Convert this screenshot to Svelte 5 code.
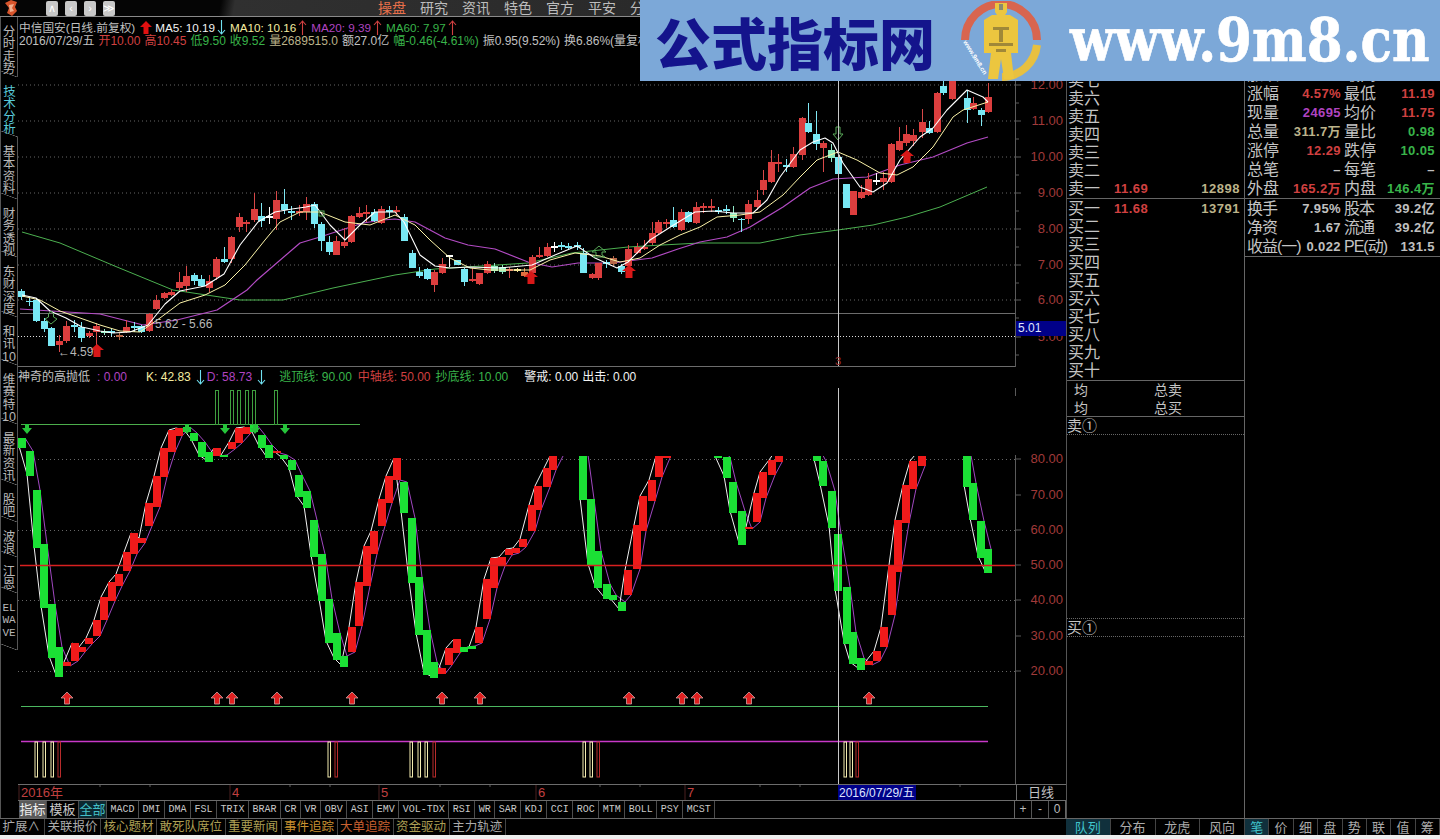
<script>
  const menu = ['操盘', '研究', '资讯', '特色', '官方', '平安', '分'];
  const tabs = [
    { t: ['分', '时', '走', '势'], h: 60 }, { t: ['技', '术', '分', '析'], h: 60, on: true }, { t: ['基', '本', '资', '料'], h: 62 }, { t: ['财', '务', '透', '视'], h: 58 },
    { t: ['东', '财', '深', '度'], h: 60 }, { t: ['和', '讯', '10'], h: 48 }, { t: ['维', '赛', '特', '10'], h: 59 }, { t: ['最', '新', '资', '讯'], h: 61 },
    { t: ['股', '吧'], h: 37 }, { t: ['波', '浪'], h: 35 }, { t: ['江', '恩'], h: 36 }
  ];

  const line1 = [
    { t: '中信国安(日线.前复权)', c: 'gray' }, { a: 'fat' }, { t: 'MA5: 10.19', c: 'white' }, { a: 'down' },
    { t: 'MA10: 10.16', c: 'yellow', m: 1 }, { a: 'up' }, { t: 'MA20: 9.39', c: 'purple', m: 1 }, { a: 'up' },
    { t: 'MA60: 7.97', c: 'green', m: 1 }, { a: 'up' }
  ];
  const line2 = [
    ['2016/07/29/五', 'gray'], ['开10.00', 'red'], ['高10.45', 'red'], ['低9.50', 'green'], ['收9.52', 'green'],
    ['量2689515.0', 'khaki'], ['额27.0亿', 'gray'], ['幅-0.46(-4.61%)', 'green'], ['振0.95(9.52%)', 'gray'], ['换6.86%(量复权)', 'gray']
  ];

  // x, top, bottom, high, low, colour: page coordinates
  const candles = [
    [21,291,297,289,300,'c'],[29,301,302,297,306,'c'],[36,300,321,299,322,'c'],[44,321,329,318,332,'c'],[51,328,346,327,346,'c'],
    [59,341,345,335,352,'r'],[66,326,341,321,343,'r'],[74,325,327,320,332,'c'],[81,327,338,322,342,'c'],[89,333,336,331,338,'r'],
    [96,326,332,323,345,'r'],[104,331,333,329,335,'g'],[111,331,333,328,336,'c'],[119,335,337,333,340,'b'],[126,327,332,320,333,'r'],
    [134,326,328,322,332,'c'],[141,326,332,325,333,'c'],[149,314,331,313,332,'r'],[156,300,309,295,310,'r'],[164,293,298,292,299,'r'],
    [171,292,295,290,296,'r'],[179,282,288,272,290,'r'],[186,276,286,266,292,'r'],[194,275,281,273,285,'c'],[201,279,286,275,287,'c'],
    [209,281,288,275,292,'r'],[216,259,277,257,280,'r'],[224,259,262,247,263,'c'],[231,237,259,236,263,'r'],[239,217,227,213,232,'r'],
    [246,222,224,220,232,'r'],[254,209,220,193,222,'r'],[261,216,221,203,227,'c'],[269,216,218,207,224,'w'],[276,200,219,191,230,'r'],
    [284,204,210,189,214,'c'],[291,211,213,206,220,'c'],[299,211,213,205,216,'r'],[306,204,212,197,220,'r'],[314,204,224,202,228,'c'],
    [321,224,241,222,251,'c'],[329,242,252,236,255,'c'],[336,241,255,236,255,'r'],[344,242,246,228,248,'r'],[351,216,242,215,243,'r'],
    [359,213,217,207,218,'r'],[366,212,214,205,222,'r'],[374,212,221,209,222,'c'],[381,209,223,206,224,'r'],[389,210,212,206,218,'c'],
    [396,210,212,206,216,'r'],[404,217,241,214,241,'c'],[412,253,268,250,268,'c'],[419,272,276,267,278,'c'],[427,269,279,268,280,'c'],
    [434,272,285,270,292,'r'],[442,264,273,258,274,'r'],[449,255,257,256,267,'w'],[457,260,265,260,265,'c'],[464,269,282,268,286,'c'],
    [472,279,281,268,282,'r'],[479,273,284,273,285,'r'],[487,264,273,261,274,'r'],[494,266,271,263,273,'g'],[502,267,272,265,274,'g'],
    [509,269,271,267,278,'r'],[517,269,271,268,272,'y'],[524,272,276,268,277,'o'],[532,257,273,255,277,'r'],[539,255,257,247,258,'r'],
    [547,247,256,243,257,'r'],[554,246,248,242,252,'w'],[561,245,247,242,250,'c'],[568,246,248,243,249,'c'],[577,245,247,242,250,'c'],
    [583,253,273,248,273,'c'],[592,274,278,273,279,'r'],[598,263,278,263,280,'r'],[606,262,264,260,268,'c'],[613,258,264,256,266,'b'],
    [621,266,272,264,274,'c'],[628,249,266,245,268,'r'],[637,247,253,243,254,'r'],[644,247,249,240,250,'r'],[652,233,243,222,245,'r'],
    [658,222,233,220,234,'r'],[666,222,224,219,228,'r'],[673,220,227,207,228,'c'],[681,212,230,209,231,'r'],[688,212,222,211,223,'c'],
    [696,207,223,202,224,'r'],[703,206,208,203,213,'r'],[711,206,208,199,212,'r'],[718,210,212,207,214,'c'],[726,209,211,205,214,'c'],
    [733,213,218,206,222,'g'],[741,219,220,218,232,'c'],[748,204,219,200,224,'r'],[757,200,207,190,210,'r'],[763,180,190,170,195,'r'],
    [771,162,182,150,183,'r'],[778,162,164,154,172,'r'],[786,165,167,159,172,'c'],[793,154,167,147,168,'r'],[802,118,155,117,160,'r'],
    [808,123,132,103,133,'c'],[816,134,144,111,150,'c'],[823,143,148,141,172,'r'],[831,150,158,144,162,'g'],[838,157,174,156,175,'c'],
    [846,184,208,184,208,'c'],[853,191,215,191,215,'r'],[861,192,198,185,199,'r'],[868,179,195,173,196,'r'],[876,180,182,173,185,'w'],
    [883,178,182,172,190,'r'],[891,144,182,143,183,'r'],[899,141,150,127,151,'r'],[906,134,143,125,146,'r'],[913,135,141,129,146,'r'],
    [922,122,132,109,138,'r'],[929,128,133,121,134,'c'],[937,93,132,92,133,'r'],[943,86,93,76,95,'c'],[952,78,99,72,100,'r'],
    [967,98,110,90,123,'c'],[973,103,109,97,110,'r'],[981,110,115,108,126,'c'],[988,97,112,83,113,'r']
  ];
  const ma5 = '22,295 36,298 50,311 66,318 82,327 100,331 113,333 130,332 148,325 165,304 180,291 205,286 224,274 240,245 258,222 275,212 292,209 306,207 315,205 330,225 345,240 360,225 375,212 395,212 404,222 420,255 435,266 450,268 470,267 500,268 532,265 555,255 577,246 595,258 617,268 628,262 650,240 672,226 695,212 713,211 733,213 753,213 767,200 780,177 800,150 813,142 825,138 833,143 843,163 860,187 873,192 887,183 900,160 920,137 933,128 947,110 967,90 983,97 988,102';
  const ma10 = '22,296 40,300 60,311 80,318 100,325 120,331 140,332 160,318 180,303 205,295 225,285 245,265 265,240 280,222 300,212 320,212 345,222 370,225 395,215 415,225 430,240 450,258 470,268 490,270 510,270 530,270 550,260 575,253 600,256 620,262 640,258 660,245 680,235 700,227 717,217 740,215 760,212 783,195 800,177 817,160 838,152 857,160 880,173 897,175 913,167 933,147 953,117 963,110 988,102';
  const ma20 = '20,309 67,312 100,314 143,325 177,320 217,310 247,290 257,280 300,243 320,237 363,223 383,220 395,219 415,222 445,238 468,245 495,249 528,262 552,267 578,263 612,263 652,258 678,249 700,242 727,237 750,227 783,207 810,188 833,179 867,177 900,165 933,157 967,143 988,137';
  const ma60 = '22,232 60,243 117,267 173,290 240,300 283,300 333,288 395,275 435,269 482,266 528,263 572,253 628,247 662,245 700,243 760,243 800,235 838,230 873,225 907,217 940,207 987,187';

  const priceGrid = [85, 121, 157, 193, 229, 265, 300];
  const priceAxis = [[85,'12.00'],[121,'11.00'],[157,'10.00'],[193,'9.00'],[229,'8.00'],[265,'7.00'],[300,'6.00'],[337,'5.00']];
  const kdAxis = [[459,'80.00'],[495,'70.00'],[530,'60.00'],[565,'50.00'],[600,'40.00'],[636,'30.00'],[671,'20.00']];
  const kdGrid = [459.5, 530.5, 600.5, 671.5];

  // x, top, bottom, red?
  const kd = [
    [22,438,448,0],[30,451,476,0],[37,490,548,0],[44,544,608,0],[52,604,658,0],[59,647,677,0],[67,662,666,1],[75,643,661,1],
    [82,647,652,1],[89,638,644,1],[97,620,636,1],[104,597,620,1],[112,582,601,1],[119,574,586,1],[127,552,571,1],[134,533,554,1],
    [142,538,543,1],[149,503,526,1],[157,476,507,1],[164,448,477,1],[172,430,452,1],[179,428,436,1],[187,427,432,0],[194,433,441,0],
    [202,442,457,0],[209,452,462,0],[217,448,456,1],[224,455,457,0],[232,442,449,1],[239,428,443,1],[247,427,434,1],[254,425,432,0],
    [262,435,448,0],[269,445,458,0],[277,451,453,1],[284,455,459,0],[292,460,470,0],[299,475,497,0],[307,491,508,0],[314,520,557,0],
    [322,554,601,0],[329,599,643,0],[337,633,660,0],[344,656,667,0],[352,627,652,1],[359,582,626,1],[367,546,586,1],[374,531,554,1],
    [382,499,526,1],[389,476,503,1],[397,458,480,1],[404,482,513,0],[412,518,583,0],[419,577,635,0],[427,630,675,0],[434,662,678,0],
    [442,668,674,1],[449,648,665,1],[457,639,653,1],[464,647,652,0],[472,646,649,0],[479,627,643,1],[487,579,619,1],[494,558,588,1],
    [502,557,566,1],[509,549,555,1],[516,548,553,1],[523,539,547,1],[532,505,531,1],[538,486,510,1],[547,468,487,1],[553,456,470,1],
    [560,440,456,1],[583,440,500,0],[591,499,566,0],[598,551,588,0],[607,584,599,0],[613,595,600,0],[622,602,611,0],[628,570,595,1],
    [637,525,569,1],[643,496,531,1],[652,480,501,1],[659,456,477,1],[667,450,458,1],[718,450,458,0],[727,457,478,0],[733,482,513,0],
    [742,511,545,0],[749,527,529,1],[757,493,522,1],[763,472,498,1],[772,460,475,1],[779,450,462,1],[817,450,461,0],[823,461,486,0],
    [832,491,528,0],[838,534,591,0],[847,587,644,0],[853,632,664,0],[861,658,670,0],[869,661,665,1],[877,651,661,1],[884,627,647,1],
    [892,565,615,1],[898,520,572,1],[906,485,523,1],[913,461,489,1],[922,450,466,1],[967,450,487,0],[973,483,520,0],[981,521,558,0],[988,549,573,0]
  ];
  // the curves break where they run off the top of the panel
  const curve = (dx, pick) => kd.map((b, i) => {
    const cmd = i === 0 || b[0] - kd[i - 1][0] > 20 ? 'M' : 'L';
    return `${cmd}${b[0] + dx} ${pick(b)}`;
  }).join('');
  const kLine = curve(-3, b => (b[3] ? b[1] : b[2] - 2));
  const dLine = curve(3, b => (b[3] ? b[2] : b[1]));

  const topBars = [217, 232, 239, 247, 254, 276];
  const greenArrows = [27, 187, 225, 255, 285];
  const redArrows = [67, 217, 232, 277, 352, 442, 480, 629, 682, 697, 749, 869];
  const paleBars = [36, 44, 52, 329, 411, 419, 426, 584, 591, 845, 851];
  const redBars = [59, 336, 434, 598, 857];
  const months = [[21,'2016年'], [232,'4'], [381,'5'], [538,'6'], [687,'7']];
  const dateTicks = [100, 150, 290, 330, 440, 490, 600, 640, 760, 800, 880, 960];

  const kdTitle = [
    ['神奇的高抛低', 'gray', 0], [': 0.00', 'purple', 7], ['K: 42.83', 'yellow', 19], ['↓', 'cyan', 3], ['D: 58.73', 'purple', 2], ['↓', 'cyan', 3],
    ['逃顶线: 90.00', 'green', 13], ['中轴线: 50.00', 'red', 6], ['抄底线: 10.00', 'green', 5], ['警戒: 0.00', 'white', 16], ['出击: 0.00', 'white', 4]
  ];

  const nums = ['七', '六', '五', '四', '三', '二', '一'];
  const sells = nums.map(n => ({ l: '卖' + n, p: n === '一' ? '11.69' : '', v: n === '一' ? '12898' : '' }));
  const buys = ['一', '二', '三', '四', '五', '六', '七', '八', '九', '十'].map(n => ({ l: '买' + n, p: n === '一' ? '11.68' : '', v: n === '一' ? '13791' : '' }));

  const quote = [
    ['涨跌', '', '', '最高', '', ''],
    ['涨幅', '4.57%', 'red', '最低', '11.19', 'red'], ['现量', '24695', 'purple', '均价', '11.75', 'red'],
    ['总量', '311.7万', 'khaki', '量比', '0.98', 'green'], ['涨停', '12.29', 'red', '跌停', '10.05', 'green'],
    ['总笔', '–', 'gray', '每笔', '–', 'gray'], ['外盘', '165.2万', 'red', '内盘', '146.4万', 'green']
  ];
  const finance = [
    ['换手', '7.95%', 'gray', '股本', '39.2亿', 'gray'], ['净资', '1.67', 'gray', '流通', '39.2亿', 'gray'],
    ['收益(一)', '0.022', 'gray', 'PE(动)', '131.5', 'gray']
  ];

  const indicators = ['MACD','DMI','DMA','FSL','TRIX','BRAR','CR','VR','OBV','ASI','EMV','VOL-TDX','RSI','WR','SAR','KDJ','CCI','ROC','MTM','BOLL','PSY','MCST'];
  const links = [['扩展∧',''],['关联报价',''],['核心题材','olive'],['敢死队席位','olive'],['重要新闻','olive'],['事件追踪','amber'],['大单追踪','orange'],['资金驱动','olive'],['主力轨迹','']];
  const sideTabs = ['分布', '龙虎', '风向'];
  const detailTabs = ['价', '细', '盘', '势', '联', '值', '筹'];
</script>

{#snippet upArrow(x, y)}
  <path class="red-arrow" d="M{x} {y}l6 6h-3.5v6h-5v-6h-3.5z" />
{/snippet}

{#snippet thin(down, cls)}
  <svg class="thin {cls}" width="9" height="15" viewBox="0 0 9 15">
    {#if down}
      <path d="M4.5 0v14M1 10l3.5 4 3.5-4" />
    {:else}
      <path d="M4.5 15V1M1 5l3.5-4 3.5 4" />
    {/if}
  </svg>
{/snippet}

<div class="screen">
  <header class="top">
    <svg class="mark" width="14" height="16" viewBox="0 0 14 16"><path d="M1 3L7 0l6 2-2 5 2 4-5 5-5-3 2-5z" fill="#d8552c" /><path d="M5 5l5-1-2 4 2 3-4 1z" fill="#f0b090" /></svg>
    <div class="nav-btns">
      <button>∧</button><button>‹</button><button>›</button><button>≫</button>
    </div>
    <nav class="menu">
      {#each menu as m, i}<span class:hot={i === 0}>{m}</span>{/each}
    </nav>
  </header>

  <div class="main">
    <aside class="tabs">
      {#each tabs as tab}
        <div class="tab" class:on={tab.on} style="height:{tab.h}px">
          {#each tab.t as c}<div>{c}</div>{/each}
        </div>
      {/each}
      <div class="tab wave"><div>EL</div><div>WA</div><div>VE</div></div>
    </aside>

    <section class="charts">
      <div class="info">
        <div class="info-line first">
          {#each line1 as it}
            {#if it.a === 'fat'}
              <svg class="fat" width="12" height="13" viewBox="0 0 12 13"><path d="M6 0l6 6H8.5v7h-5V6H0z" fill="#e01010" /></svg>
            {:else if it.a === 'down'}
              {@render thin(true, 'cyan')}
            {:else if it.a === 'up'}
              {@render thin(false, 'red')}
            {:else}
              <span class={it.c} class:gap={it.m}>{it.t}</span>
            {/if}
          {/each}
        </div>
        <div class="info-line second">
          {#each line2 as [t, c]}<span class={c}>{t}</span>{/each}
        </div>
      </div>

      <svg class="price" width="1048" height="316" viewBox="18 51 1048 316">
        <g class="grid">
          {#each priceGrid as y}<line x1="18" x2="1015" y1={y} y2={y} />{/each}
        </g>
        <line class="sep" x1="20" x2="1015" y1="313.5" y2="313.5" />
        <line class="dots-white" x1="18" x2="1015" y1="336.5" y2="336.5" />
        <line class="axis" x1="1015.5" x2="1015.5" y1="51" y2="367" />
        {#each priceAxis as [y, t]}
          <line class="axis" x1="1015" x2="1021" y1={y} y2={y} />
          <line class="axis" x1="1015" x2="1019" y1={y + 18} y2={y + 18} />
          <text class="tick" x="1063" y={y + 4}>{t}</text>
        {/each}
        <rect class="now" x="1016" y="321" width="50" height="15" />
        <text class="now-text" x="1018" y="332">5.01</text>

        <polyline class="ma m60" points={ma60} />
        <polyline class="ma m20" points={ma20} />
        {#each candles as [x, top, bot, hi, lo, c]}
          <g class="k-{c}">
            <line x1={x + .5} x2={x + .5} y1={hi} y2={lo} />
            <rect x={x - 3} y={top} width="7" height={bot - top} />
          </g>
        {/each}
        <polyline class="ma m10" points={ma10} />
        <polyline class="ma m5" points={ma5} />

        <path class="mark-g" d="M51 311l2.5 3v3l3.5 2-6 5-6-5 3.5-2v-3z" />
        <rect class="mark-g" x="319" y="211" width="5" height="5" />
        <path class="mark-g" d="M599 246l7 6h-4v3l3 2h-12l3-2v-3h-4z" />
        <path class="mark-g" d="M836 127h4v7h3l-5 6-5-6h3z" />
        {#each [[97, 344], [531, 271], [629, 265], [907, 150]] as [x, y]}
          <path class="big-arrow" d="M{x} {y}l7 6h-3.5v7h-7v-7H{x - 7}z" />
        {/each}
        <text class="note" x="155" y="328">5.62 - 5.66</text>
        <text class="note" x="58" y="356">←4.59</text>
        <line class="cross" x1="838.5" x2="838.5" y1="51" y2="367" />
        <text class="mark-r" x="835" y="365">3</text>
        <line class="sep" x1="18" x2="1015" y1="366.5" y2="366.5" />
      </svg>

      <div class="kd-title">
        {#each kdTitle as [t, c, m]}
          {#if t === '↓'}
            <span class="kd-arrow" style="margin-left:{m}px">{@render thin(true, c)}</span>
          {:else}
            <span class={c} style="margin-left:{m}px">{t}</span>
          {/if}
        {/each}
      </div>

      <svg class="kd" width="1048" height="396" viewBox="18 388 1048 396">
        <defs>
          <clipPath id="kdclip">
            <path d="M18 425H360V456H1015V784H18z" />
          </clipPath>
        </defs>
        <g class="grid">
          {#each kdGrid as y}<line x1={y === 459.5 ? 34 : 18} x2="1015" y1={y} y2={y} />{/each}
        </g>
        <line class="axis" x1="1015.5" x2="1015.5" y1="388" y2="396" />
        <line class="axis" x1="1015.5" x2="1015.5" y1="455" y2="784" />
        {#each kdAxis as [y, t]}
          <line class="axis" x1="1015" x2="1021" y1={y} y2={y} />
          <text class="tick" x="1063" y={y + 4}>{t}</text>
        {/each}
        <line class="hi" x1="21" x2="360" y1="424.5" y2="424.5" />
        {#each topBars as x}<rect class="top-bar" x={x - 1.5} y="390.5" width="3" height="34" />{/each}

        <g clip-path="url(#kdclip)">
          <path class="d-line" d={dLine} />
          <path class="k-line" d={kLine} />
          {#each kd as [x, top, bot, red]}
            <rect class={red ? 'bar-r' : 'bar-g'} x={x - 4} y={top} width="8" height={bot - top} />
          {/each}
        </g>
        <line class="mid" x1="20" x2="1015" y1="565.5" y2="565.5" />
        {#each greenArrows as x}
          <path class="green-arrow" d="M{x - 2} 424h4v4h3l-5 6-5-6h3z" />
        {/each}
        {#each redArrows as x}{@render upArrow(x, 692)}{/each}
        <line class="low-line" x1="21" x2="988" y1="706.5" y2="706.5" />
        <line class="sig-line" x1="21" x2="988" y1="741.5" y2="741.5" />
        {#each paleBars as x}<rect class="pale" x={x - 1} y="742" width="2.5" height="35" />{/each}
        {#each redBars as x}<rect class="dark-r" x={x - 1} y="742" width="2.5" height="35" />{/each}
        <line class="cross" x1="838.5" x2="838.5" y1="388" y2="784" />
      </svg>

      <svg class="dates" width="1048" height="17" viewBox="18 784 1048 17">
        <line class="sep" x1="18" x2="1066" y1="784.5" y2="784.5" />
        <line class="sep" x1="18" x2="1066" y1="800.5" y2="800.5" />
        {#each dateTicks as x}<line class="axis" x1={x} x2={x} y1="785" y2="787" />{/each}
        {#each months as [x, t]}
          <line class="dark-tick" x1={x - 2} x2={x - 2} y1="785" y2="800" />
          <text class="month" x={x} y="797">{t}</text>
        {/each}
        <rect class="now" x="838" y="785" width="78" height="15" />
        <text class="now-text" x="839" y="797">2016/07/29/五</text>
        <line class="sep" x1="1016.5" x2="1016.5" y1="784" y2="800" />
        <text class="cycle" x="1041" y="797">日线</text>
      </svg>

      <div class="toolbar">
        <div class="indicators">
          <span class="tool cn active">指标</span><span class="tool cn wide">模板</span><span class="tool cn all">全部</span>
          {#each indicators as t}<span class="tool">{t}</span>{/each}
        </div>
        <div class="zoom-btns"><span>+</span><span>-</span><span>0</span></div>
      </div>
    </section>

    <section class="book">
      <div class="side sell">
        {#each sells as r}
          <div class="row"><span>{r.l}</span><b class="red">{r.p}</b><b class="khaki">{r.v}</b></div>
        {/each}
      </div>
      <div class="side buy">
        {#each buys as r}
          <div class="row"><span>{r.l}</span><b class="red">{r.p}</b><b class="khaki">{r.v}</b></div>
        {/each}
      </div>
      <div class="sum">
        <div class="sum-row"><span class="clip">均</span><span>总卖</span></div>
        <div class="sum-row"><span class="clip">均</span><span>总买</span></div>
      </div>
      <div class="queue">卖①</div>
      <div class="queue-fill"></div>
      <div class="queue top-dot">买①</div>
    </section>

    <section class="quote">
      <div class="q-group first">
        {#each quote as [a, av, ac, b, bv, bc]}
          <div class="q-row"><span>{a}</span><b class={ac}>{av}</b><span>{b}</span><b class={bc}>{bv}</b></div>
        {/each}
      </div>
      <div class="q-group">
        {#each finance as [a, av, ac, b, bv, bc]}
          <div class="q-row"><span class="nar">{a}</span><b class={ac}>{av}</b><span class="nar">{b}</span><b class={bc}>{bv}</b></div>
        {/each}
      </div>
    </section>
  </div>

  <footer class="links">
    <div class="link-list">
      {#each links as [t, c]}<span class={c}>{t}</span>{/each}
    </div>
    <div class="side-tabs">
      <span class="sel">队列</span>
      {#each sideTabs as t}<span>{t}</span>{/each}
    </div>
    <div class="detail-tabs">
      <span class="sel">笔</span>
      {#each detailTabs as t}<span>{t}</span>{/each}
    </div>
  </footer>
  <div class="strip"></div>

  <div class="banner">
    <span class="site-name">公式指标网</span>
    <svg class="logo" width="82" height="80" viewBox="0 0 82 80">
      <path d="M5 39A36 36 0 0 1 77 39" fill="none" stroke="#d8654f" stroke-width="8" />
      <path d="M77 44A36 36 0 0 1 42 76" fill="none" stroke="#e8c040" stroke-width="8" />
      <path d="M35 2h12v9l-2 3h5l8 5v33l-7 0 3 26H44l-3-20-3 20H28l3-26h-7V19l8-5h5l-2-3z" fill="#ecc63f" />
      <path d="M33 26h16v3H33zM39 29h4v12h-4zM29 42h24v3H29zM36 48h10v3H36z" fill="#a08838" />
      <path d="M39 3h4v6h-4z" fill="#8a8a70" />
      <text class="logo-url" transform="translate(3 41) rotate(58)">www.9m8.cn</text>
    </svg>
    <span class="site-url">www.9m8.cn</span>
  </div>
</div>

<style>
  :global(body) { margin: 0; background: #000; }
  .screen { position: relative; width: 1440px; height: 839px; overflow: hidden; background: #000; color: #bbb;
    font-family: "Liberation Sans", "Noto Sans CJK SC", sans-serif; font-size: 12px; }

  .top { height: 16px; display: flex; align-items: center; border-bottom: 1px solid #8a8a8a; overflow: hidden;
    background: linear-gradient(100deg, #050505 0 218px, #303030 232px, #1e1e1e 100%); }
  .mark { margin-left: 4px; }
  .nav-btns { display: flex; gap: 7px; margin-left: 28px; }
  .nav-btns button { width: 12px; height: 15px; padding: 0; border: 0; border-radius: 2px; background: #c8c8c8; color: #fff; font-size: 11px; line-height: 14px; }
  .menu { display: flex; gap: 14px; margin-left: 263px; font-size: 14px; color: #bdbdbd; line-height: 16px; }
  .hot { color: #e8704a; }

  .main { display: flex; height: 801px; }

  .tabs { width: 17px; flex: none; border-left: 1px solid #555; color: #b8b8b8; font-size: 12.5px; line-height: 12.4px; }
  .tab { box-sizing: border-box; padding-top: 9px; text-align: center; white-space: nowrap; border-right: 1px solid #555;
    background: linear-gradient(to top right, transparent calc(50% - .6px), #777 50%, transparent calc(50% + .6px)) bottom / 100% 6px no-repeat; }
  .tab.on { color: #58c8d8; border-right: 0; }
  .wave { height: 57px; font-family: "Liberation Mono", monospace; font-size: 11px; }

  .charts { width: 1048px; flex: none; display: flex; flex-direction: column; }
  .info { height: 34px; padding-top: 3px; box-sizing: border-box; }
  .info-line { display: flex; height: 15px; line-height: 15px; white-space: nowrap; font-size: 12px; padding-left: 1px; }
  .info-line.first { font-size: 11.7px; }
  .info-line > span.gap { margin-left: 4px; }
  .fat { margin: 1px 3px 0 5px; flex: none; }
  .thin { flex: none; margin-left: 2px; fill: none; stroke: currentColor; stroke-width: 1.1; }
  .second { gap: 4px; margin-top: -1px; }
  .white { color: #f2f2f2; } .gray { color: #c0c0c0; } .red { color: #d04040; } .green { color: #39b44a; }
  .yellow { color: #f4eca0; } .purple { color: #b044c0; } .cyan { color: #70e0f0; } .khaki { color: #bcb38a; }

  svg { display: block; }
  .price, .kd { flex: none; }
  .grid line { stroke: #666; stroke-dasharray: 1 3; }
  .sep { stroke: #6c6c6c; }
  .dots-white { stroke: #ddd; stroke-dasharray: 1 2; }
  .axis { stroke: #5a5a5a; }
  .tick { fill: #a03a3a; font-size: 13px; text-anchor: end; }
  .now { fill: #000088; }
  .now-text { fill: #dfe4ff; font-size: 12px; }
  .ma { fill: none; stroke-linejoin: round; }
  .m5 { stroke: #fff; stroke-width: 1.1; } .m10 { stroke: #fbf3a8; stroke-width: 1; }
  .m20 { stroke: #b34bc4; stroke-width: 1.2; } .m60 { stroke: #4cb050; stroke-width: 1; }
  .k-r line { stroke: #d84848; } .k-r rect { fill: #dc3e3e; }
  .k-c line { stroke: #80e8f4; } .k-c rect { fill: #78e8f4; }
  .k-w line { stroke: #fff; } .k-w rect { fill: #fff; }
  .k-g line { stroke: #90e8c8; } .k-g rect { fill: #90ecc0; }
  .k-b line { stroke: #b86848; } .k-b rect { fill: #b86848; }
  .k-y line { stroke: #f0e090; } .k-y rect { fill: #f0e090; }
  .k-o line { stroke: #e07040; } .k-o rect { fill: #e07040; }
  .mark-g { fill: none; stroke: #58a858; }
  .big-arrow { fill: #d81818; }
  .note { fill: #b8b8b8; font-size: 12px; }
  .cross { stroke: #c8c8c8; }
  .mark-r { fill: #a03030; font-size: 11px; }

  .kd-title { height: 21px; line-height: 21px; display: flex; white-space: nowrap; font-size: 12px; }
  .kd-arrow { padding-top: 3px; }
  .mid { stroke: #d82020; stroke-width: 1.5; }
  .hi { stroke: #4cae4c; stroke-width: 1.2; }
  .top-bar { fill: none; stroke: #3f9f3f; }
  .bar-r { fill: #f01a1a; } .bar-g { fill: #1be035; }
  .k-line { fill: none; stroke: #f0f0f0; }
  .d-line { fill: none; stroke: #a048c0; }
  .green-arrow { fill: #26c43a; }
  .red-arrow { fill: #e02020; stroke: #d0a0a0; stroke-width: .8; }
  .low-line { stroke: #4cb860; stroke-width: 1.2; }
  .sig-line { stroke: #c838c8; stroke-width: 1.5; }
  .pale { fill: none; stroke: #f4ecb0; }
  .dark-r { fill: none; stroke: #b82c2c; }

  .dates { flex: none; }
  .dark-tick { stroke: #4a2020; }
  .month { fill: #c04040; font-size: 13px; }
  .cycle { fill: #c0c0c0; font-size: 13px; text-anchor: middle; }

  .toolbar { height: 17px; display: flex; justify-content: space-between; }
  .indicators { display: flex; margin-left: 1px; }
  .tool { display: block; padding: 0 3.5px; border-right: 1px solid #4c4c4c; font-family: "Liberation Mono", monospace; font-size: 10px; line-height: 17px; color: #c8c8c8; }
  .tool.cn { font-family: "Noto Sans CJK SC", sans-serif; font-size: 13px; padding: 0 .5px; width: 26px; text-align: center; line-height: 16px; }
  .tool.wide { width: 30px; }
  .tool.active { background: #5a5a5a; color: #eee; }
  .tool.all { color: #44c0c8; background: #0c2830; }
  .zoom-btns { display: flex; width: 50px; margin-right: 0; border-left: 1px solid #666; border-right: 1px solid #666; }
  .zoom-btns span { flex: 1; text-align: center; line-height: 16px; color: #bbb; border-right: 1px solid #555; }
  .zoom-btns span:last-child { border-right: 0; }

  .book { width: 179px; box-sizing: border-box; flex: none; display: flex; flex-direction: column; border-left: 1px solid #555; border-right: 1px solid #666; color: #c4c4c4; font-size: 16px; }
  .side { border-bottom: 1px solid #666; }
  .side.sell { padding-top: 55px; }
  .side.buy { padding-top: 1px; }
  .row { display: grid; grid-template-columns: 47px 50px 76px; height: 18px; line-height: 18px; }
  .row span { white-space: nowrap; margin-left: 1px; }
  .row b { font-size: 13px; letter-spacing: .5px; font-weight: 700; }
  .row b.khaki { text-align: right; }
  .sum { font-size: 14px; border-bottom: 1px solid #666; }
  .sum-row { height: 17.5px; line-height: 18px; display: flex; }
  .clip { width: 87px; padding-left: 7px; box-sizing: border-box; }
  .queue { height: 17px; line-height: 18px; font-size: 15px; border-bottom: 1px dotted #666; }
  .queue-fill { height: 183px; }
  .queue.top-dot { border-top: 1px dotted #666; }

  .quote { flex: 1; color: #c4c4c4; font-size: 16px; }
  .q-group { border-bottom: 1px solid #666; }
  .q-group.first { padding-top: 48px; padding-bottom: 0; }
  .q-row { display: grid; grid-template-columns: 34px 60px 34px 60px; height: 19px; line-height: 19px; padding-left: 2px; white-space: nowrap; }
  .q-row b { text-align: right; font-size: 13px; letter-spacing: .4px; font-weight: 700; }
  .q-row .nar { letter-spacing: -1px; }
  .q-row span:nth-of-type(2) { padding-left: 3px; }

  .links { height: 17px; display: flex; border-top: 1px solid #666; box-sizing: border-box; font-size: 12.5px; line-height: 17px; color: #aaa; }
  .link-list { width: 1066px; display: flex; }
  .link-list span { padding: 0 2.5px; border-right: 1px solid #444; }
  .link-list span:first-child { padding-right: 4px; }
  .olive { color: #ad9f54; } .amber { color: #c89030; } .orange { color: #c86030; }
  .side-tabs { width: 179px; display: flex; font-size: 13px; }
  .side-tabs span { flex: 1; text-align: center; border-right: 1px solid #444; }
  .detail-tabs { flex: 1; display: flex; font-size: 13px; }
  .detail-tabs span { flex: 1; text-align: center; border-right: 1px solid #444; }
  .sel { background: #10303c; color: #40c4cc; }
  .strip { height: 5px; background: #eee; }

  .banner { position: absolute; left: 640px; top: 0; width: 800px; height: 81px; display: flex; align-items: center; background: #7ca8d8; overflow: hidden; }
  .site-name { flex: none; margin-left: 15px; width: 305px; font-family: "Noto Sans CJK SC", sans-serif; font-weight: 900; font-size: 56px; line-height: 80px; color: #14148c; white-space: nowrap; }
  .logo { flex: none; }
  .logo-url { fill: #fff; font-size: 6.5px; font-weight: 700; }
  .site-url { flex: none; margin-left: 28px; font-family: "DejaVu Serif", serif; font-weight: 700; font-size: 59px; color: #fff; line-height: 80px; white-space: nowrap; transform: scaleX(.875); transform-origin: left center; -webkit-text-stroke: .7px #fff; }
</style>
